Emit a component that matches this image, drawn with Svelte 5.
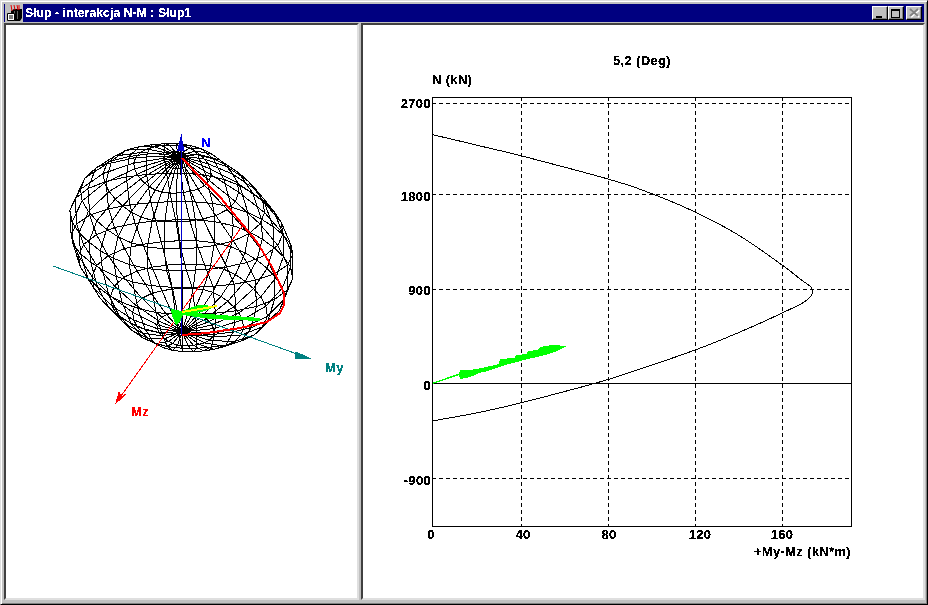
<script>
  const cx = 182, cy = 244.5, a = 104, b = 97, t = 26 * Math.PI / 180, p0 = 25 * Math.PI / 180;
  function pt(al, ph) {
    const g = 1 + 0.08 * Math.cos(2 * (ph - p0)) + 0.03 * Math.cos(4 * (ph - p0));
    const s = Math.sin(al);
    const c = Math.pow(Math.max(Math.cos(al), 0), s > 0 ? 1 + 0.6 * s : 1);
    const x = a * c * Math.cos(ph) * g - (s > 0 ? 11 : 7) * Math.sin(2 * al);
    const y = a * c * Math.sin(ph) * g;
    const tilt = Math.sin(t) * (s < 0 ? 1 - 0.55 * s : 1 + 0.7 * s);
    return [(cx + x).toFixed(1), (cy - b * s * Math.cos(t) + y * tilt).toFixed(1)].join(',');
  }
  const rad = Math.PI / 180;
  const wire = [];
  for (let lat = -75; lat <= 75; lat += 15) {
    const s = [];
    for (let lon = 0; lon <= 360; lon += 12) s.push(pt(lat * rad, lon * rad));
    wire.push(s.join(' '));
  }
  for (let lon = 0; lon < 360; lon += 12) {
    const s = [];
    for (let lat = -90; lat <= 90; lat += 15) s.push(pt(lat * rad, lon * rad));
    wire.push(s.join(' '));
  }
  // smooth the interaction curve through its measured points
  const knots = [[432,134.5],[493,149],[520,155.5],[608,179],[650,193],[695,212],[740,236],[782,265],[800,279],[812,289],[807,300],[782,313],[740,332],[695,350],[640,369],[596,383],[520,403],[476,413],[432,421]];
  const out = [];
  for (let i = 0; i < knots.length - 1; i++) {
    const p0k = knots[Math.max(i - 1, 0)], p1 = knots[i], p2 = knots[i + 1], p3 = knots[Math.min(i + 2, knots.length - 1)];
    for (let j = 0; j < 8; j++) {
      const u = j / 8;
      const f = (k) => 0.5 * (2 * p1[k] + (p2[k] - p0k[k]) * u + (2 * p0k[k] - 5 * p1[k] + 4 * p2[k] - p3[k]) * u * u + (3 * p1[k] - p0k[k] - 3 * p2[k] + p3[k]) * u * u * u);
      out.push(f(0).toFixed(1) + ',' + f(1).toFixed(1));
    }
  }
  out.push('432,421');
  const curve = out.join(' ');
  const hLines = [103, 194, 289, 478];
  const vLines = [521, 608, 695, 782];
  const yTicks = [['2700', 108], ['1800', 201], ['900', 295], ['0', 390], ['-900', 485]];
  const xTicks = [['0', 431], ['40', 523], ['80', 609], ['120', 700], ['160', 782]];
</script>

<svg class="defs" width="0" height="0" aria-hidden="true">
  <filter id="crisp" x="-5%" y="-20%" width="110%" height="140%" color-interpolation-filters="sRGB">
    <feComponentTransfer><feFuncA type="discrete" tableValues="0 0 0 1 1 1 1 1" /></feComponentTransfer>
  </filter>
</svg>

<div class="window">
  <header class="titlebar">
    <svg class="appicon" width="18" height="18" viewBox="0 0 18 18">
      <rect width="18" height="18" fill="#c0c0c0" />
      <path d="M6 7l3-2h8v9l-2 3H6z" fill="#000" />
      <path d="M9 7h1v8H9zM12 7h1v8h-1z" fill="#606060" />
      <path d="M6 1l1 6M9 1l1 5M12 1l1 5M14 1v5" stroke="#e00000" />
      <path d="M2.500 9.500h7v7h-7z" fill="#fff" stroke="#000" />
      <path d="M4 12h4M4 14h4" stroke="#000" />
    </svg>
    <span class="title">Słup - interakcja N-M : Słup1</span>
    <div class="buttons">
      <button class="cbtn" aria-label="Minimalizuj"><i class="min"></i></button>
      <button class="cbtn" aria-label="Maksymalizuj"><i class="max"></i></button>
      <button class="cbtn close" aria-label="Zamknij">
        <svg width="11" height="10" viewBox="0 0 11 10"><path d="M2 2l8 7M10 2l-8 7" stroke="#fff" stroke-width="2" /><path d="M1 1l8 7M9 1l-8 7" stroke="#808080" stroke-width="2" /></svg>
      </button>
    </div>
  </header>

  <div class="panes">
    <section class="pane left">
      <svg width="351" height="573" viewBox="6 25 351 573">
        <g class="aliased">
          {#each wire as w}
            <polyline points={w} fill="none" stroke="#000" />
          {/each}
          <path d="M53 266 311 359" stroke="#008080" />
          <path d="M311 359 296 352 295 358z" fill="#008080" stroke="#008080" />
          <path d="M243 225 116 403" stroke="#f00" />
          <path d="M116 403 119 392 122 397 126 394z" fill="#f00" stroke="#f00" />
          <path d="M181 134V335" stroke="#0000d0" />
          <path d="M181 137 184 150H178z" fill="#0000d0" stroke="#0000d0" />
          <polyline points="182,158 200,177 220,197 243,225 257,242 272,267 284,293 284,305 280,313 267,322 240,328 207,333 182,335" fill="none" stroke="#f00" stroke-width="2" />
          <path d="M171 309 182 311 198 305 218 306 205 311 195 313 260 318 260 321 210 319 183 315 180 322 176 325 172 316z" fill="#0f0" />
          <path d="M182 312 200 309 217 306" fill="none" stroke="#ff0" stroke-width="2" />
        </g>
        <g class="label">
          <text x="201" y="147" class="blue">N</text>
          <text x="325" y="372" class="teal">My</text>
          <text x="131" y="416" class="red">Mz</text>
        </g>
      </svg>
    </section>

    <section class="pane right">
      <svg width="560" height="573" viewBox="363 25 560 573">
        <g class="aliased">
          {#each hLines as y}
            <path d="M432 {y}H851" stroke="#000" stroke-dasharray="4 3" />
          {/each}
          {#each vLines as x}
            <path d="M{x} 97V526" stroke="#000" stroke-dasharray="4 3" />
          {/each}
          <rect x="432.5" y="97.5" width="419" height="429" fill="none" stroke="#000" />
          <path d="M432 383.5H851" stroke="#000" />
          <polyline points={curve} fill="none" stroke="#000" />
          <path d="M433 382.500 459 373.500 460 370 470 370 482 368 499 364 500 359 515 358 516 355 527 354 528 351 537 350 540 347 552 345 567 346 555 352 545 355 537 357 528 359 517 362 505 365 500 367 484 372 482 372 470 377 460 379 459 375 433 384z" fill="#0f0" />
        </g>
        <g class="label">
          <text x="613" y="65">5,2 (Deg)</text>
          <text x="432" y="84">N (kN)</text>
          {#each yTicks as [s, y]}
            <text x="431" y={y} text-anchor="end">{s}</text>
          {/each}
          {#each xTicks as [s, x]}
            <text x={x} y="539" text-anchor="middle">{s}</text>
          {/each}
          <text x="851" y="556" text-anchor="end">+My-Mz (kN*m)</text>
        </g>
      </svg>
    </section>
  </div>
</div>

<style>
  :global(body) { margin: 0; background: #c0c0c0; }
  .defs { position: absolute; }
  .window {
    box-sizing: border-box;
    width: 928px;
    height: 605px;
    background: #c0c0c0;
    border: 1px solid;
    border-color: #dfdfdf #000 #000 #dfdfdf;
    box-shadow: inset 1px 1px 0 #fff, inset -1px -1px 0 #808080;
    padding: 3px 3px 4px;
    display: flex;
    flex-direction: column;
  }
  .titlebar {
    height: 18px;
    flex: none;
    background: #000080;
    display: flex;
    align-items: center;
    margin-bottom: 1px;
  }
  .appicon { flex: none; margin-left: 1px; }
  .title {
    margin-left: 2px;
    color: #fff;
    font: bold 12px "Liberation Sans", sans-serif;
    letter-spacing: 0.15px;
    filter: url(#crisp);
  }
  .buttons { margin-left: auto; display: flex; margin-right: 2px; }
  .cbtn {
    box-sizing: border-box;
    width: 16px;
    height: 14px;
    padding: 0;
    background: #c0c0c0;
    border: 1px solid;
    border-color: #fff #000 #000 #fff;
    box-shadow: inset -1px -1px 0 #808080;
    display: flex;
    align-items: center;
    justify-content: center;
  }
  .close { margin-left: 2px; }
  .min { width: 6px; height: 2px; background: #000; margin-top: 7px; margin-right: 2px; }
  .max { box-sizing: border-box; width: 9px; height: 9px; border: 1px solid #000; border-top-width: 2px; margin-right: 1px; }
  .panes { flex: 1; display: flex; gap: 2px; min-height: 0; }
  .pane {
    background: #fff;
    border: 2px solid;
    border-color: #404040 #dfdfdf #dfdfdf #404040;
    overflow: hidden;
    flex: none;
  }
  .pane svg { display: block; }
  .aliased { shape-rendering: crispEdges; }
  .label {
    font: bold 13px "Liberation Sans", sans-serif;
    letter-spacing: 0.33px;
    fill: #000;
    filter: url(#crisp);
  }
  .blue { fill: #0000ff; }
  .teal { fill: #008080; }
  .red { fill: #ff0000; }
</style>
